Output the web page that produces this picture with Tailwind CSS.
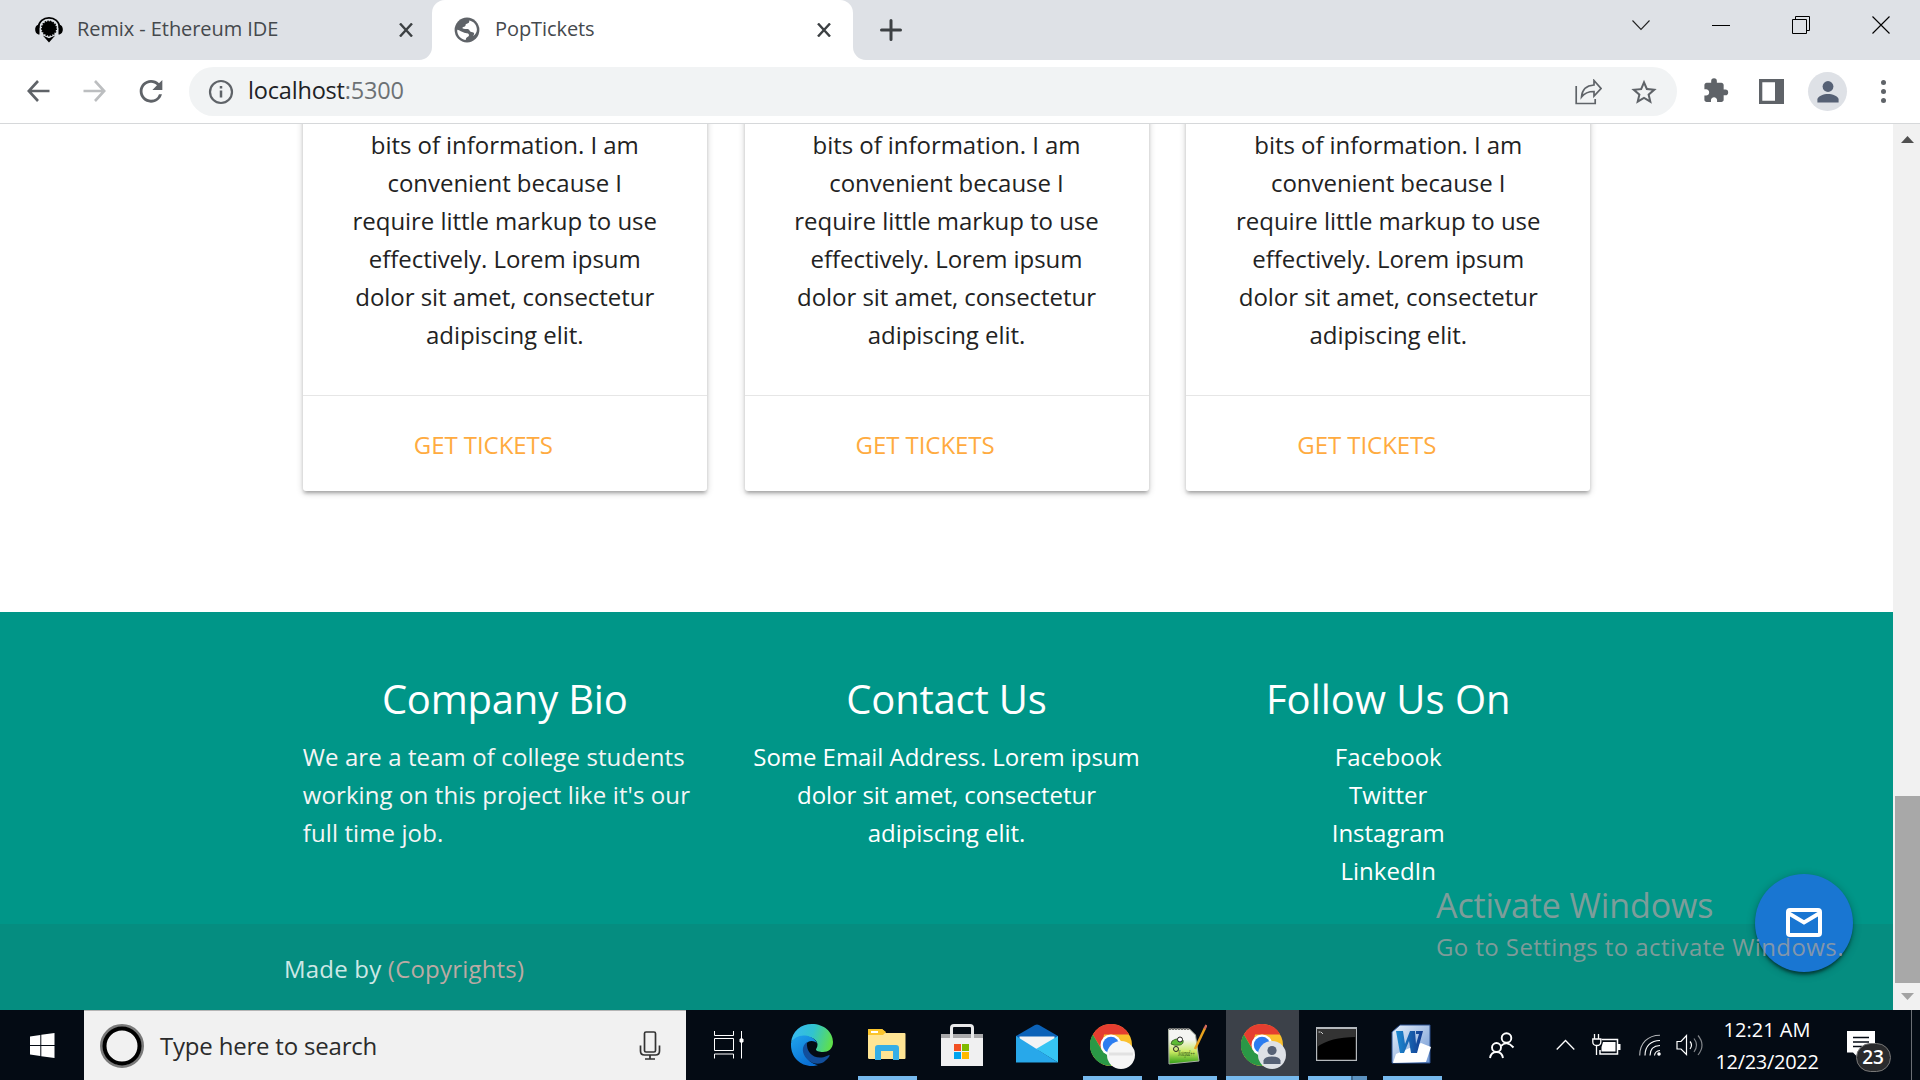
<!DOCTYPE html>
<html lang="en">
<head>
<meta charset="utf-8">
<title>PopTickets</title>
<script src="https://cdn.jsdelivr.net/npm/@tailwindcss/browser@4"></script>
</head>
<body class="relative flex h-[1080px] w-[1920px] flex-col overflow-hidden bg-white font-['Open_Sans','Noto_Sans',sans-serif]">

<!-- Tab strip -->
<header class="flex h-[60px] shrink-0 bg-[#dee1e6] text-[20px] text-[#45494d]">
  <div class="flex w-[432px] items-center pl-[34px]">
    <svg class="h-[30px] w-[30px] shrink-0" viewBox="0 0 30 30">
      <path d="M4.500 13C4.500 -0.500 25.500 -0.500 25.500 13" fill="none" stroke="#000" stroke-width="1.800"/>
      <circle cx="15" cy="13.500" r="7.200"/>
      <circle cx="15" cy="13.500" r="7.300" fill="none" stroke="#000" stroke-width="1.500" stroke-dasharray="1.500 1.200"/>
      <path d="M5.500 9.500C2.500 9.500 1.200 12 1.200 14.500S2.500 19.500 5.500 19.500zM24.500 9.500c3 0 4.300 2.500 4.300 5s-1.300 5-4.300 5zM8.800 20.500 15 23.200l6.200-2.700L15 27.500z"/>
    </svg>
    <span class="ml-[13px] w-[322px] pb-[2px] tracking-[-0.080px] whitespace-nowrap">Remix - Ethereum IDE</span>
    <svg class="h-[14px] w-[14px] shrink-0" viewBox="0 0 14 14"><path d="M1 0.500 13 13.500M13 0.500 1 13.500" stroke="#3c4043" stroke-width="2.400"/></svg>
  </div>
  <div class="relative flex w-[421px] items-center rounded-t-[13px] bg-white pl-[22px]">
    <svg class="absolute bottom-0 -left-[13px] h-[13px] w-[13px]" viewBox="0 0 13 13"><path d="M13 0v13H0A13 13 0 0 0 13 0z" fill="#fff"/></svg>
    <svg class="absolute -right-[13px] bottom-0 h-[13px] w-[13px]" viewBox="0 0 13 13"><path d="M0 0v13h13A13 13 0 0 1 0 0z" fill="#fff"/></svg>
    <svg class="h-[26px] w-[26px] shrink-0" viewBox="1.500 1.500 21 21"><circle cx="12" cy="12" r="10" fill="#5f6368"/><path d="M13.800 4.300c.3 1.500-.6 2.400-1.900 2.600-1 .2-1 .6-1.100 1.500-.1.800-.9 1-1.800 1.100-.7.100-.9.900-.3 1.300.7.500 2.500.2 3.900.4 1.600.3 1.200 1.500 2.300 2.200.8.500 2.500 0 2.800 1.200.2.900-.5 1.400-.7 2.300 1.800-1.400 3-3.100 3-5.400 0-3.300-2.400-6.500-6.200-7.200zM4.100 11.800c-.4 4 2.800 7.700 6.600 8.200.6-.1.300-1.300.9-1.800 1-.8 2.100-1 2-2.200-.2-1.500-2.500-1.300-3.700-1.700-1.900-.7-3.800-2-5.800-2.500z" fill="#fff"/></svg>
    <span class="ml-[15px] w-[322px] pb-[2px] tracking-[-0.080px]">PopTickets</span>
    <svg class="h-[14px] w-[14px] shrink-0" viewBox="0 0 14 14"><path d="M1 0.500 13 13.500M13 0.500 1 13.500" stroke="#3c4043" stroke-width="2.400"/></svg>
  </div>
  <div class="flex flex-1 items-center pl-[27px]">
    <svg class="h-[22px] w-[22px]" viewBox="0 0 22 22"><path d="M11 1.500v19M1.500 11h19" stroke="#3c4043" stroke-width="3" stroke-linecap="round"/></svg>
  </div>
  <div class="flex items-start gap-[62px] pt-[16px] pr-[30px]">
    <svg class="h-[18px] w-[18px]" viewBox="0 0 18 18"><path d="M.5 4.500 9 13.500 17.500 4.500" fill="none" stroke="#222" stroke-width="1.100"/></svg>
    <svg class="h-[18px] w-[18px]" viewBox="0 0 18 18"><path d="M0 9.500h18" stroke="#000"/></svg>
    <svg class="h-[18px] w-[18px]" viewBox="0 0 18 18"><path d="M.5 3.500h14v14H.5zM3.500 3.500v-3h14v14h-3" fill="none" stroke="#000"/></svg>
    <svg class="h-[18px] w-[18px]" viewBox="0 0 18 18"><path d="M.5.500l17 17M17.500.500l-17 17" stroke="#000" stroke-width="1.100"/></svg>
  </div>
</header>

<!-- Toolbar -->
<div class="flex h-[64px] shrink-0 items-center border-b border-[#d6d8da] bg-white pr-[34px] pl-[26px]">
  <svg class="h-[24px] w-[24px]" viewBox="0 0 24 24"><path d="M12 1 2.800 11 12 21M3 11h20.500" fill="none" stroke="#5f6368" stroke-width="2.600"/></svg>
  <svg class="ml-[33px] h-[24px] w-[24px]" viewBox="0 0 24 24"><path d="M12 1l9.200 10L12 21M21 11H.5" fill="none" stroke="#bcbec0" stroke-width="2.600"/></svg>
  <svg class="ml-[27px] h-[34px] w-[34px]" viewBox="0 0.500 24 24"><path d="M17.650 6.350A7.958 7.958 0 0 0 12 4c-4.420 0-7.990 3.580-7.990 8s3.570 8 7.990 8c3.730 0 6.840-2.550 7.730-6h-2.080A5.990 5.990 0 0 1 12 18c-3.310 0-6-2.690-6-6s2.690-6 6-6c1.660 0 3.140.690 4.220 1.780L13 11h7V4l-2.350 2.350z" fill="#5f6368"/></svg>
  <div class="ml-[21px] flex h-[49px] w-[1488px] items-center rounded-full bg-[#f1f3f4] pr-[17px] pl-[19px]">
    <svg class="h-[26px] w-[26px]" viewBox="0 0 26 26"><circle cx="13" cy="13" r="11" fill="none" stroke="#5f6368" stroke-width="2.200"/><path d="M13 11.500v7M13 7v2.600" stroke="#5f6368" stroke-width="2.500"/></svg>
    <div class="ml-[14px] flex-1 pb-[1px] text-[23.500px] tracking-[-0.180px] text-[#202124]">localhost<span class="text-[#6d7175]">:5300</span></div>
    <svg class="h-[26px] w-[27px]" viewBox="0 0 27 26"><path d="M1.200 7v17.500h19V20M19 1.500l7 8-7 7.500v-4.500c-6 0-9.500 1.500-12.500 5.500C7 11 11.500 6.500 19 6z" fill="none" stroke="#5f6368" stroke-width="1.700"/></svg>
    <svg class="ml-[26px] h-[32px] w-[32px]" viewBox="0 0 24 24"><path d="m22 9.240-7.190-.620L12 2 9.190 8.630 2 9.240l5.460 4.730L5.820 21 12 17.270 18.180 21l-1.630-7.030L22 9.240zM12 15.400l-3.760 2.270 1-4.280-3.320-2.880 4.380-.380L12 6.100l1.710 4.040 4.380.380-3.320 2.880 1 4.280L12 15.400z" fill="#5f6368" transform="translate(.600 .900) scale(.950)"/></svg>
  </div>
  <svg class="ml-[25px] h-[28px] w-[28px]" viewBox="1.500 1.500 22 22"><path d="M20.500 11H19V7c0-1.100-.9-2-2-2h-4V3.500a2.500 2.500 0 0 0-5 0V5H4c-1.100 0-1.990.9-1.990 2v3.800H3.500c1.490 0 2.700 1.210 2.700 2.700s-1.210 2.700-2.700 2.700H2V20c0 1.100.9 2 2 2h3.800v-1.500c0-1.490 1.210-2.700 2.700-2.700s2.700 1.210 2.700 2.700V22H17c1.100 0 2-.9 2-2v-4h1.500a2.500 2.500 0 0 0 0-5z" fill="#5f6368" transform="translate(1.600 .8) scale(.89)"/></svg>
  <svg class="ml-[29px] h-[25px] w-[25px]" viewBox="0 0 25 25"><path fill-rule="evenodd" d="M0 0h25v25H0zM3.300 3.300v18.400h12.700V3.300z" fill="#5f6368"/></svg>
  <div class="ml-[24px] flex h-[39px] w-[39px] items-center justify-center rounded-full bg-[#dee1e6]">
    <svg class="h-[22px] w-[22px]" viewBox="0 0 22 22"><circle cx="11" cy="5.500" r="5.400" fill="#566175"/><path d="M.4 21.500v-3C.4 15 7 13 11 13s10.600 2 10.600 5.500v3z" fill="#566175"/></svg>
  </div>
  <div class="ml-[34px] flex flex-col gap-[4px]"><i class="h-[5px] w-[5px] rounded-full bg-[#5f6368]"></i><i class="h-[5px] w-[5px] rounded-full bg-[#5f6368]"></i><i class="h-[5px] w-[5px] rounded-full bg-[#5f6368]"></i></div>
</div>

<!-- Page viewport -->
<div class="flex h-[886px] shrink-0 overflow-hidden">
  <main class="flex w-[1893px] flex-col overflow-hidden">
    <section class="-mt-[10px] flex h-[498px] shrink-0 items-start gap-[37.750px] pl-[302.750px] text-center text-[24px] leading-[38px] tracking-[-0.050px] text-[#222]">
      <article class="flex h-[377px] w-[404px] flex-col rounded-b-[3px] bg-white shadow-[0_3px_3px_0_rgba(0,0,0,0.14),0_4px_2px_-3px_rgba(0,0,0,0.12),0_2px_7px_0_rgba(0,0,0,0.2)]">
        <p class="h-[281px] pt-[12px]">bits of information. I am<br>convenient because I<br>require little markup to use<br>effectively. Lorem ipsum<br>dolor sit amet, consectetur<br>adipiscing elit.</p>
        <div class="flex-1 border-t border-[#e6e6e6] pt-[30px] pl-[111px] text-left text-[#ffab40]"><a>GET TICKETS</a></div>
      </article>
      <article class="flex h-[377px] w-[404px] flex-col rounded-b-[3px] bg-white shadow-[0_3px_3px_0_rgba(0,0,0,0.14),0_4px_2px_-3px_rgba(0,0,0,0.12),0_2px_7px_0_rgba(0,0,0,0.2)]">
        <p class="h-[281px] pt-[12px]">bits of information. I am<br>convenient because I<br>require little markup to use<br>effectively. Lorem ipsum<br>dolor sit amet, consectetur<br>adipiscing elit.</p>
        <div class="flex-1 border-t border-[#e6e6e6] pt-[30px] pl-[111px] text-left text-[#ffab40]"><a>GET TICKETS</a></div>
      </article>
      <article class="flex h-[377px] w-[404px] flex-col rounded-b-[3px] bg-white shadow-[0_3px_3px_0_rgba(0,0,0,0.14),0_4px_2px_-3px_rgba(0,0,0,0.12),0_2px_7px_0_rgba(0,0,0,0.2)]">
        <p class="h-[281px] pt-[12px]">bits of information. I am<br>convenient because I<br>require little markup to use<br>effectively. Lorem ipsum<br>dolor sit amet, consectetur<br>adipiscing elit.</p>
        <div class="flex-1 border-t border-[#e6e6e6] pt-[30px] pl-[111px] text-left text-[#ffab40]"><a>GET TICKETS</a></div>
      </article>
    </section>
    <footer class="flex flex-1 flex-col bg-[#009688] text-[24px] leading-[38px] text-white">
      <div class="flex h-[312px] gap-[37.750px] pt-[57px] pl-[302.750px] text-center">
        <div class="w-[404px]">
          <h5 class="mb-[9px] text-[40px] leading-[60px] tracking-[-0.200px]">Company Bio</h5>
          <p class="text-left tracking-[0.100px] text-[#f5f5f5]">We are a team of college students<br>working on this project like it's our<br>full time job.</p>
        </div>
        <div class="w-[404px]">
          <h5 class="mb-[9px] text-[40px] leading-[60px] tracking-[-0.200px]">Contact Us</h5>
          <p class="tracking-[-0.050px]">Some Email Address. Lorem ipsum<br>dolor sit amet, consectetur<br>adipiscing elit.</p>
        </div>
        <div class="w-[404px]">
          <h5 class="mb-[9px] text-[40px] leading-[60px]">Follow Us On</h5>
          <ul><li>Facebook</li><li>Twitter</li><li>Instagram</li><li>LinkedIn</li></ul>
        </div>
      </div>
      <div class="flex-1 bg-[#058d80] pt-[26px] pl-[284px] tracking-[0.200px] text-[#cde8e6]">Made by <a class="text-[#bcaaa4]">(Copyrights)</a></div>
    </footer>
  </main>
  <!-- Scrollbar -->
  <div class="flex w-[27px] flex-col items-end bg-[#f1f1f1]">
    <svg class="mt-[12px] mr-[6px] h-[7px] w-[13px]" viewBox="0 0 13 7"><path d="M0 7 6.500 0 13 7z" fill="#505050"/></svg>
    <div class="mt-[653px] h-[187px] w-[25px] bg-[#a8a8a8]"></div>
    <svg class="mt-[10px] mr-[6px] h-[7px] w-[13px]" viewBox="0 0 13 7"><path d="M0 0h13L6.500 7z" fill="#a3a3a3"/></svg>
  </div>
</div>

<!-- Floating mail button -->
<button class="absolute top-[874px] left-[1755px] flex h-[98px] w-[98px] items-center justify-center rounded-full bg-[#1976d2] pb-[2px] shadow-[0_3px_3px_0_rgba(0,0,0,0.2),0_4px_3px_-2px_rgba(0,0,0,0.3),0_2px_8px_0_rgba(0,0,0,0.3)]">
  <svg class="h-[29px] w-[36px]" viewBox="0 0 36 29"><rect x="2" y="2" width="32" height="25" rx="2" fill="none" stroke="#fff" stroke-width="4"/><path d="M3 5.500 18 14.500 33 5.500" fill="none" stroke="#fff" stroke-width="4"/></svg>
</button>
<!-- Activation watermark -->
<div class="absolute top-[881px] left-[1436px] whitespace-nowrap text-[#a0a0a0]/80">
  <p class="text-[34px] leading-[48px] tracking-[-0.100px]">Activate Windows</p>
  <p class="text-[24px] leading-[36px] tracking-[0.420px]">Go to Settings to activate Windows.</p>
</div>

<!-- Taskbar -->
<nav class="flex h-[70px] shrink-0 bg-[#040b14] text-white">
  <div class="flex w-[84px] items-center justify-center">
    <svg class="h-[25px] w-[25px]" viewBox="0 0 25 25"><path d="M0 3.500 10.300 2v10H0zM11.300 1.800 24.500 0v12H11.300zM0 13h10.300v10L0 21.500zM11.300 13h13.200v12l-13.200-1.800z" fill="#fff"/></svg>
  </div>
  <div class="flex w-[602px] items-center border-t border-[#b5b5b5] bg-[#f1f1f1] pr-[25px] pl-[16px] text-[24px] tracking-[-0.200px] text-[#2b2b2b]">
    <svg class="h-[44px] w-[44px]" viewBox="0 0 44 44"><circle cx="22" cy="22" r="20.500" fill="none" stroke="#7a7a7a" stroke-width="3"/><circle cx="22" cy="22" r="17.500" fill="none" stroke="#000" stroke-width="4"/></svg>
    <span class="ml-[16px] flex-1">Type here to search</span>
    <svg class="h-[29px] w-[22px]" viewBox="0 0 22 29" fill="none" stroke="#333" stroke-width="1.700"><rect x="5.500" y="1" width="11" height="20" rx="1.500"/><path d="M1.500 14.500v5.500q0 4 4 4h11q4 0 4-4v-5.500M11 24v3.500M6 28h10"/></svg>
  </div>
  <div class="flex w-[88.500px] items-center pl-[28px]">
    <svg class="h-[28px] w-[30px]" viewBox="0 0 30 28" fill="none" stroke="#fff"><path d="M.5 0v4.500h19V0M.5 7.500h19v12H.5zM.5 27.500v-4.500h19v4.500M27.500 0v27.500"/><path d="M26 8h3v3h-3z" fill="#fff"/></svg>
  </div>
  <!-- Pinned and running apps -->
  <div class="flex">
    <div class="flex w-[75px] flex-col items-center pt-[14px]">
      <svg class="h-[42px] w-[42px]" viewBox="0 0 42 42">
        <defs>
          <linearGradient id="ea" x1="0" y1="0.300" x2="1" y2="0.500"><stop offset="0" stop-color="#37b8f3"/><stop offset=".5" stop-color="#31c3d0"/><stop offset="1" stop-color="#5fe04b"/></linearGradient>
          <linearGradient id="eb" x1="0" y1="0" x2=".6" y2="1"><stop offset="0" stop-color="#1fa4ec"/><stop offset="1" stop-color="#0a6fd4"/></linearGradient>
        </defs>
        <path d="M0 19C1 7 10 0 21 0c12 0 21 8 21 18 0 7-5 10-10 10-4 0-7-1-7-2.500 0-1 1.500-2 1.500-5 0-4-5-8-12-8C8 12.500 2 15 0 19z" fill="url(#ea)"/>
        <path d="M0 19C2 14 8 11 14 11.500c6 .5 11 4 12 8-1-2.500-9-5-12 2-3 9 4 18 13 19.500-2 .8-4 1-6 1C9 42 0 33 0 21z" fill="url(#eb)"/>
        <path d="M16 18c-6 4-5 12 0 17 6 6 14 6 18 2 3-2.500 5-5 4.500-6-.5-.6-4 2.500-9.500 2.500-8 0-14-6-13-15.500z" fill="#124f9c"/>
      </svg>
    </div>
    <div class="flex w-[75px] flex-col items-center justify-between pt-[18px]">
      <svg class="h-[34px] w-[38px]" viewBox="0 0 38 34"><path d="M0 4V2q0-1 1-1h13l4 4H36.500q1 0 1 1v24q0 1-1 1h-35Q0 31 0 30z" fill="#ffe594"/><path d="M0 7V2q0-1 1-1h13l4 3-3 3z" fill="#fbc52c"/><path d="M3 4h7" stroke="#fff" stroke-width="2"/><path d="M7 32V20q0-3 3-3h18q3 0 3 3v12h-6v-9H13v9z" fill="#35aee6"/></svg>
      <i class="h-[4px] w-[59px] bg-[#76b9ed]"></i>
    </div>
    <div class="flex w-[75px] flex-col items-center pt-[14px]">
      <svg class="h-[42px] w-[42px]" viewBox="0 0 42 42"><path d="M0 10h42v6H0z" fill="#a9a9ab"/><path d="M0 14h42v28H0z" fill="#f0f0f1"/><path d="M10.500 14V4q0-2.500 2.500-2.500h16q2.500 0 2.500 2.500v10" fill="none" stroke="#e9e9ea" stroke-width="3"/><path d="M13 20h7v7h-7z" fill="#f25022"/><path d="M21 20h7v7h-7z" fill="#7fba00"/><path d="M13 28h7v7h-7z" fill="#00a4ef"/><path d="M21 28h7v7h-7z" fill="#ffb900"/></svg>
    </div>
    <div class="flex w-[75px] flex-col items-center pt-[14px]">
      <svg class="h-[40px] w-[42px]" viewBox="0 0 42 40"><path d="M0 12 19 1q2-1 4 0l19 11v8H0z" fill="#0b62b8"/><path d="M3.500 12.500h35v6L21 27 3.500 18z" fill="#f3f4f5"/><path d="M42 12v26.500L20 25z" fill="#36c5f3"/><path d="M0 12 42 38.500H0z" fill="#28a8ea"/></svg>
    </div>
    <div class="flex w-[75px] flex-col items-center justify-between pt-[14px] pl-[2px]">
      <svg class="h-[46px] w-[46px]" viewBox="0 0 46 46"><circle cx="21" cy="21" r="21" fill="#fbc02d"/><path d="M14 10.500h25.200a21 21 0 0 0-36.400 0l9 15z" fill="#e53e30"/><path d="M2.800 10.500A21 21 0 0 0 21 42l9-15.800-18 0z" fill="#2a9846"/><circle cx="21" cy="21" r="10.500" fill="#fff"/><circle cx="21" cy="21" r="8.200" fill="#2c7df0"/><circle cx="31" cy="31" r="14" fill="#f6f6f6"/><path d="M19 30h24" stroke="#e2e2e2" stroke-width="3"/></svg>
      <i class="mr-[2px] h-[4px] w-[59px] bg-[#76b9ed]"></i>
    </div>
    <div class="flex w-[75px] flex-col items-center justify-between pt-[14px]">
      <svg class="h-[42px] w-[40px]" viewBox="0 0 40 42"><defs><linearGradient id="np" x1="0" y1="0" x2="0" y2="1"><stop offset=".3" stop-color="#f4f5f2"/><stop offset=".65" stop-color="#c9ea62"/><stop offset="1" stop-color="#2c9c14"/></linearGradient></defs><path d="M1.500 5h21l6 6L32 37 2 40z" fill="url(#np)" stroke="#aab3a4"/><path d="M2 5h20" stroke="#777" stroke-width="2" stroke-dasharray="2 1"/><path d="M5 17q6-4 11-1 1 4-3 5-6 1-9-1z" fill="#5dba34" stroke="#274c16" stroke-width=".7"/><circle cx="13" cy="15.500" r="2.500" fill="#fff" stroke="#222"/><circle cx="9" cy="25" r="2.500" fill="none" stroke="#222"/><text x="11" y="32" class="font-['Liberation_Serif',serif] text-[9px] italic" textLength="17" lengthAdjust="spacingAndGlyphs" fill="#20420f">Notepad++</text><path d="M38 4 28 25" stroke="#e7a21d" stroke-width="2.500"/><path d="M39.500 1 37.500 5" stroke="#d46a5a" stroke-width="2.500"/></svg>
      <i class="h-[4px] w-[59px] bg-[#76b9ed]"></i>
    </div>
    <div class="mx-[1px] flex w-[73px] flex-col items-center justify-between bg-[#3c4149] pt-[14px]">
      <svg class="ml-[4px] h-[46px] w-[46px]" viewBox="0 0 46 46"><circle cx="21" cy="21" r="21" fill="#fbc02d"/><path d="M14 10.500h25.200a21 21 0 0 0-36.400 0l9 15z" fill="#e53e30"/><path d="M2.800 10.500A21 21 0 0 0 21 42l9-15.800-18 0z" fill="#2a9846"/><circle cx="21" cy="21" r="10.500" fill="#fff"/><circle cx="21" cy="21" r="8.200" fill="#2c7df0"/><circle cx="31" cy="31" r="14" fill="#dee1e6"/><circle cx="31" cy="26.500" r="4.600" fill="#566175"/><path d="M22.500 40v-3.500q1-4 8.500-4t8.500 4V40z" fill="#566175"/></svg>
      <i class="h-[4px] w-full bg-[#76b9ed]"></i>
    </div>
    <div class="flex w-[75px] flex-col items-center justify-between pt-[17px]">
      <svg class="mr-[2px] h-[34px] w-[41px]" viewBox="0 0 41 34"><path d="M0 0h41v34H0z" fill="#b5b9bd"/><path d="M1.200 2h38.600v30.800H1.200z" fill="#000"/><path d="M1.200 2h38.600v8Q14 10 1.200 20z" fill="#333"/><path d="M2.500 5h2M5 5l2 2" stroke="#ccc"/></svg>
      <div class="flex h-[4px] w-[59px]"><i class="w-[43px] bg-[#76b9ed]"></i><i class="w-[2px] bg-[#3f6a90]"></i><i class="flex-1 bg-[#5c92c0]"></i></div>
    </div>
    <div class="flex w-[75px] flex-col items-center justify-between pt-[14px]">
      <svg class="mr-[2px] h-[40px] w-[41px]" viewBox="0 0 41 40"><defs><linearGradient id="wb" x1="0" y1="0" x2="1" y2="1"><stop offset="0" stop-color="#e8f1fb"/><stop offset="1" stop-color="#6d95d2"/></linearGradient><linearGradient id="wl" x1="0" y1="0" x2="1" y2="0"><stop offset="0" stop-color="#1d8ad2"/><stop offset="1" stop-color="#123a8f"/></linearGradient></defs><path d="M1 8 9 1h30v38H1z" fill="url(#wb)" stroke="#2a508f"/><path d="m2 39 3-9 25-11 10 4-5 15z" fill="#fff"/><path d="M5 7h7l2 13 5-13h5l1 13 3-10h-3V7h7l-6 22h-6l-2-12-5 12H9z" fill="url(#wl)"/></svg>
      <i class="h-[4px] w-[59px] bg-[#76b9ed]"></i>
    </div>
  </div>
  <!-- System tray -->
  <div class="flex flex-1 items-center pl-[39px]">
    <svg class="h-[27px] w-[26px]" viewBox="0 0 26 27" fill="none" stroke="#fff" stroke-width="1.900"><circle cx="17.500" cy="6" r="4.800"/><path d="M12 14q5.500-6 12.500 1.500"/><circle cx="7.500" cy="15.500" r="4.500"/><path d="M1 26q1-6 6.500-6t6.500 6"/></svg>
    <svg class="ml-[41px] h-[12px] w-[19px]" viewBox="0 0 19 12"><path d="M.7 10.500 9.500 1.500l8.800 9" fill="none" stroke="#fff" stroke-width="1.300"/></svg>
    <svg class="ml-[17px] h-[22px] w-[29px]" viewBox="0 0 29 22"><path d="M9.500 5.500h16v14.500H8v-4" fill="none" stroke="#fff" stroke-width="1.500"/><path d="M11 8h12.500v9.500H9.500V13zM26 10h2.500v6H26z" fill="#fff"/><path d="M2.500 0v5M6.500 0v5M4.500 11v10" stroke="#fff" stroke-width="1.300"/><path d="M.8 5h8v3q0 3.500-4 3.500T.8 8z" fill="none" stroke="#fff" stroke-width="1.300"/></svg>
    <svg class="ml-[18px] h-[22px] w-[22px]" viewBox="0 0 22 22" fill="none" stroke="#fff" stroke-width="1.100"><path d="M.7 21.500C.7 9 9 1.200 21 1.200" opacity=".7"/><path d="M6 21.500C6 12 12 6.500 21 6.500M11 21.500q0-9.500 10-10M15.500 21.500q.5-4.500 5.500-5"/><circle cx="20" cy="20" r="1.200" fill="#fff"/></svg>
    <svg class="ml-[15px] h-[22px] w-[28px]" viewBox="0 0 28 22" fill="none" stroke="#fff" stroke-width="1.200"><path d="M1 7.500h4L10.500 1.500v19L5 15H1zM14 7.500q3 3.500 0 7.500"/><path d="M18 4.500q5 6.500 0 13.500M22 1.500q8 9.500 0 19.500" opacity=".5"/></svg>
    <div class="ml-[6px] w-[115px] pt-[1px] text-center text-[20px] leading-[32px]"><p>12:21 AM</p><p class="tracking-[-0.300px]">12/23/2022</p></div>
    <div class="relative mt-[12px] ml-[22px] h-[41px] w-[45px]">
      <svg class="h-[26px] w-[28px]" viewBox="0 0 28 26"><path d="M0 0h28v21.500H10.500V26L6 21.500H0z" fill="#fff"/><path d="M6 6.500h16M6 11h16M6 15.500h9" stroke="#040b14" stroke-width="1.400"/></svg>
      <span class="absolute top-[12px] left-[9px] flex h-[29px] w-[35px] items-center justify-center rounded-full border border-[#777] bg-[#2a2b2d] text-[19px] font-semibold">23</span>
    </div>
  </div>
  <div class="mr-[8px] w-[1.500px] shrink-0 bg-[#6b6f75]"></div>
</nav>
</body>
</html>
